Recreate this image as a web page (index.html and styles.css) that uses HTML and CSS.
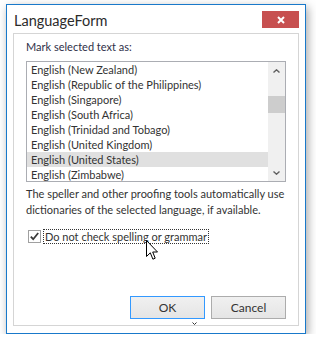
FILE: index.html
```html
<!DOCTYPE html>
<html lang="en">
<head>
 <meta charset="UTF-8">
 <meta name="viewport" content="width=device-width, initial-scale=1.0">
 <title>LanguageForm</title>
 <link rel="stylesheet" href="styles.css">
</head>
<body>
 <div class="window">
 <div class="titlebar">
 <span class="title">LanguageForm</span>
 <button class="close-btn" aria-label="Close">
 <svg width="8" height="8" viewBox="0 0 8 8"><path d="M1 1L7 7M7 1L1 7" stroke="#fff" stroke-width="2"/></svg>
 </button>
 </div>

 <div class="panel">
 <div class="label">Mark selected text as:</div>

 <div class="listbox">
 <ul class="items">
 <li>English (New Zealand)</li>
 <li>English (Republic of the Philippines)</li>
 <li>English (Singapore)</li>
 <li>English (South Africa)</li>
 <li>English (Trinidad and Tobago)</li>
 <li>English (United Kingdom)</li>
 <li class="selected">English (United States)</li>
 <li>English (Zimbabwe)</li>
 </ul>
 <div class="scrollbar">
 <span class="arrow"><svg width="7" height="4" viewBox="0 0 7 4"><path d="M0.5 3.5L3.5 0.8L6.5 3.5" fill="none" stroke="#606060" stroke-width="1.4"/></svg></span>
 <div class="track"><div class="thumb"></div></div>
 <span class="arrow"><svg width="7" height="4" viewBox="0 0 7 4"><path d="M0.5 0.5L3.5 3.2L6.5 0.5" fill="none" stroke="#606060" stroke-width="1.4"/></svg></span>
 </div>
 </div>

 <p class="note">The speller and other proofing tools automatically use<br>dictionaries of the selected language, if available.</p>

 <label class="check">
 <span class="box"><svg width="11" height="11" viewBox="0 0 11 11"><path d="M1.8 5.6L4.2 8.2L9.2 2" fill="none" stroke="#3a3a3a" stroke-width="1.8"/></svg></span>
 <span class="check-text">Do not check spelling or grammar</span>
 </label>

 <div class="buttons">
 <button class="btn default">OK</button>
 <button class="btn">Cancel</button>
 </div>

 <svg class="grip" width="5" height="3" viewBox="0 0 5 3"><path d="M0.5 0.5L2.5 2.5L4.5 0.5" fill="none" stroke="#333" stroke-width="1"/></svg>
 </div>
 </div>

 <!-- mouse pointer over the checkbox caption -->
 <svg class="cursor" width="13" height="21" viewBox="0 0 13 21"><path d="M0.5 0.5V16.5L4.3 12.8L6.9 19.2L9.2 18.2L6.7 12H11.5Z" fill="#fff" stroke="#000" stroke-width="1" stroke-linejoin="round"/></svg>
</body>
</html>
```

FILE: styles.css
```css
* {
box-sizing: border-box;
}
body {
margin: 0;
background: #fff;
font-family: Lato, "Liberation Sans", sans-serif;
font-size: 11px;
color: #333;
}
.window {
width: 300px;
height: 330px;
margin: 4px 0 0 6px;
border: 1px solid #1979ca;
background: #fff;
box-shadow: 2px 3px 9px rgba(0,0,0,0.35);
display: flex;
flex-direction: column;
padding: 0 6px 7px;
}
.titlebar {
height: 28px;
display: flex;
justify-content: space-between;
align-items: flex-start;
padding: 0 0 0 1px;
}
.title {
font-size: 14.5px;
line-height: 20px;
margin-top: 6px;
color: #2b2b2b;
}
.close-btn {
width: 37px;
height: 17px;
margin-top: 6px;
padding: 0;
border: none;
background: #c75050;
display: flex;
align-items: center;
justify-content: center;
}
.panel {
flex: 1;
position: relative;
border: 1px solid #d5d5d5;
padding: 5px 12px 6px;
display: flex;
flex-direction: column;
}
.label {
line-height: 16px;
color: #2e3048;
}
.listbox {
height: 121px;
margin-top: 6px;
border: 1px solid #abadb3;
display: flex;
overflow: hidden;
}
.items {
flex: 1;
list-style: none;
margin: 0;
padding: 0;
}
.items li {
height: 15px;
line-height: 15px;
padding-left: 4px;
white-space: nowrap;
}
.items li.selected {
background: #e0e0e0;
}
.scrollbar {
width: 17px;
background: #f0f0f0;
display: flex;
flex-direction: column;
}
.arrow {
height: 17px;
display: flex;
align-items: center;
justify-content: center;
}
.track {
flex: 1;
}
.thumb {
height: 17px;
margin-top: 17px;
background: #cdcdcd;
}
.note {
margin: 4px 0 0;
line-height: 16px;
white-space: nowrap;
}
.check {
display: flex;
align-items: center;
margin: 12px 0 0 2px;
gap: 3px;
}
.box {
width: 13px;
height: 13px;
border: 1px solid #a0a0a0;
background: #fff;
display: flex;
align-items: center;
justify-content: center;
}
.check-text {
line-height: 13px;
padding: 0 1px;
outline: 1px dotted #333;
}
.buttons {
margin-top: auto;
display: flex;
justify-content: flex-end;
gap: 6px;
}
.btn {
width: 75px;
height: 23px;
border: 1px solid #acacac;
background: linear-gradient(#f0f0f0, #e5e5e5);
font: inherit;
font-size: 12px;
color: #333;
padding: 0;
}
.btn.default {
border-color: #3399ff;
}
.grip {
position: absolute;
left: 178px;
bottom: 0;
}
.cursor {
position: absolute;
left: 146px;
top: 240px;
}
```
